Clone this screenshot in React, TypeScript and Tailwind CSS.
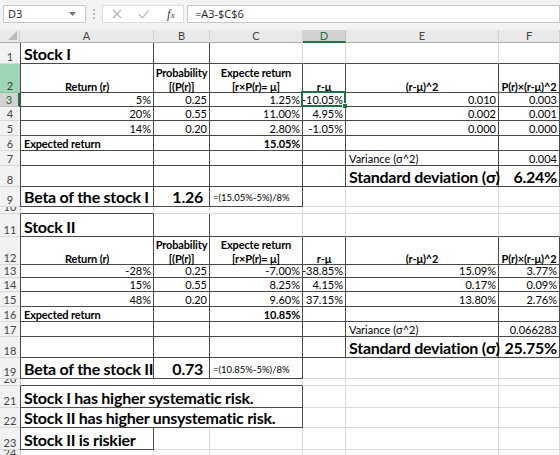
import React from 'react';

type Sp = {
  t?: React.ReactNode;
  a?: 'l' | 'r' | 'c';
  k?: 'n' | 'b' | 'big' | 'sm';
  R?: boolean;
  B?: boolean;
  L?: 0 | 1;
  s3?: boolean;
  sel?: boolean;
  pr6?: boolean;
};

const FONT = { fontFamily: 'Lato, "Open Sans", sans-serif' };

function Cell({ sp }: { sp: Sp }) {
  const cls = [
    'relative flex items-end whitespace-nowrap border-r border-b text-black',
    sp.R ? 'border-r-[#4a4a4a]' : 'border-r-[#dadada]',
    sp.B ? 'border-b-[#4a4a4a]' : 'border-b-[#dadada]',
    sp.L === 1 ? 'border-l border-l-[#4a4a4a]' : sp.L === 0 ? 'border-l border-l-[#c8c8c8]' : '',
    sp.a === 'r'
      ? sp.pr6
        ? 'justify-end pr-[6px]'
        : 'justify-end pr-[2px]'
      : sp.a === 'c'
      ? 'justify-center text-center'
      : 'justify-start pl-[3px]',
    sp.k === 'b'
      ? 'text-[11px] leading-[13px] font-bold tracking-[-0.15px]'
      : sp.k === 'big'
      ? 'text-[16px] leading-[18px] font-bold tracking-[-0.25px]'
      : sp.k === 'sm'
      ? 'text-[9.5px] leading-[12px] pb-[2px]'
      : 'text-[11px] leading-[13px]',
    sp.s3 ? 'col-span-3' : '',
  ].join(' ');
  return (
    <div className={cls}>
      {sp.t}
      {sp.sel && (
        <div className="absolute -left-[2px] -top-[2px] -right-[1px] -bottom-[1px] border-2 border-[#217346] pointer-events-none">
          <div className="absolute -right-[4px] -bottom-[4px] w-[6px] h-[6px] bg-[#217346] border border-white" />
        </div>
      )}
    </div>
  );
}

const H2 = (a: string, b: string) => (
  <span className="relative top-[2px] flex flex-col items-center leading-[14px]">
    <span>{a}</span>
    <span>{b}</span>
  </span>
);

type Data = {
  title: string;
  ret: string[];
  prob: string[];
  exp: string[];
  dev: string[];
  sq: string[];
  psq: string[];
  er: string;
  varc: string;
  sd: string;
  betaLabel: string;
  beta: string;
  formula: string;
  selFirst?: boolean;
};

const D = true;

function block(d: Data): Sp[][] {
  const rows: Sp[][] = [];
  rows.push([
    { t: d.title, k: 'big', L: 1, R: D, B: D },
    { R: D, B: D },
    { B: D },
    { B: D },
    { B: D },
    { B: D },
  ]);
  rows.push([
    { t: <span className="relative top-[1px]">Return (r)</span>, k: 'b', a: 'c', L: 1, R: D, B: D },
    { t: H2('Probability', '[(P(r)]'), k: 'b', a: 'c', R: D, B: D },
    { t: H2('Expecte return', '[r×P(r)= μ]'), k: 'b', a: 'c', R: D, B: D },
    { t: <span className="relative top-[1px]">r-μ</span>, k: 'b', a: 'c', R: D, B: D },
    { t: <span className="relative top-[1px]">(r-μ)^2</span>, k: 'b', a: 'c', R: D, B: D },
    { t: <span className="relative top-[1px]">P(r)×(r-μ)^2</span>, k: 'b', a: 'c', R: D, B: D },
  ]);
  for (let i = 0; i < 3; i++) {
    rows.push([
      { t: d.ret[i], a: 'r', L: 1, R: D, B: D },
      { t: d.prob[i], a: 'r', R: D, B: D },
      { t: d.exp[i], a: 'r', R: D, B: D },
      { t: d.dev[i], a: 'r', R: D, B: D, sel: d.selFirst && i === 0 },
      { t: d.sq[i], a: 'r', R: D, B: D },
      { t: d.psq[i], a: 'r', R: D, B: D },
    ]);
  }
  rows.push([
    { t: 'Expected return', k: 'b', L: 1, R: D, B: D },
    { R: D, B: D },
    { t: d.er, k: 'b', a: 'r', R: D, B: D },
    { R: D, B: D },
    { R: D, B: D },
    { R: D, B: D },
  ]);
  rows.push([
    { L: 1, R: D, B: D },
    { R: D, B: D },
    { R: D, B: D },
    { R: D, B: D },
    { t: 'Variance (σ^2)', R: D, B: D },
    { t: d.varc, a: 'r', R: D, B: D },
  ]);
  rows.push([
    { L: 1, R: D, B: D },
    { R: D, B: D },
    { R: D, B: D },
    { R: D, B: D },
    { t: 'Standard deviation (σ)', k: 'big', R: D, B: D },
    { t: d.sd, k: 'big', a: 'r', R: D, B: D },
  ]);
  rows.push([
    { t: d.betaLabel, k: 'big', L: 1, R: D, B: D },
    { t: d.beta, k: 'big', a: 'r', R: D, B: D, pr6: true },
    { t: d.formula, k: 'sm', R: D, B: D },
    {},
    {},
    {},
  ]);
  return rows;
}

const s1: Data = {
  title: 'Stock I',
  ret: ['5%', '20%', '14%'],
  prob: ['0.25', '0.55', '0.20'],
  exp: ['1.25%', '11.00%', '2.80%'],
  dev: ['-10.05%', '4.95%', '-1.05%'],
  sq: ['0.010', '0.002', '0.000'],
  psq: ['0.003', '0.001', '0.000'],
  er: '15.05%',
  varc: '0.004',
  sd: '6.24%',
  betaLabel: 'Beta of the stock I',
  beta: '1.26',
  formula: '=(15.05%-5%)/8%',
  selFirst: true,
};

const s2: Data = {
  title: 'Stock II',
  ret: ['-28%', '15%', '48%'],
  prob: ['0.25', '0.55', '0.20'],
  exp: ['-7.00%', '8.25%', '9.60%'],
  dev: ['-38.85%', '4.15%', '37.15%'],
  sq: ['15.09%', '0.17%', '13.80%'],
  psq: ['3.77%', '0.09%', '2.76%'],
  er: '10.85%',
  varc: '0.066283',
  sd: '25.75%',
  betaLabel: 'Beta of the stock II',
  beta: '0.73',
  formula: '=(10.85%-5%)/8%',
};

const sep = (): Sp[] => [{ L: 0, B: D }, {}, {}, {}, {}, {}];
const sep2 = (): Sp[] => [{ L: 0, B: D, s3: true }, {}, {}, {}];

const allRows: Sp[][] = [
  ...block(s1),
  sep(),
  ...block(s2),
  sep2(),
  [{ t: 'Stock I has higher systematic risk.', k: 'big', L: 1, R: D, B: D, s3: true }, {}, {}, {}],
  [{ t: 'Stock II has higher unsystematic risk.', k: 'big', L: 1, R: D, B: D, s3: true }, {}, {}, {}],
  [{ t: 'Stock II is riskier', k: 'big', L: 1, R: D, B: D }, {}, {}, {}, {}, {}],
  [{ L: 0 }, {}, {}, {}, {}, {}],
];

const labels = ['1', '2', '3', '4', '5', '6', '7', '8', '9', '10', '11', '12', '13', '14', '15', '16', '17', '18', '19', '20', '21', '22', '23', '24'];

function RowHead({ n }: { n: string }) {
  const base = 'flex items-end justify-center overflow-hidden text-[11px] leading-[13px] border-b';
  if (n === '2')
    return <div className={base + ' bg-[#9fd5b7] text-[#3a3a3a] border-b-[#8cc3a5]'}>{n}</div>;
  if (n === '3')
    return (
      <div className={base + ' bg-[#d2d2d2] text-[#217346] border-b-[#bdbdbd] border-r-2 border-r-[#217346]'}>{n}</div>
    );
  return <div className={base + ' bg-[#f2f2f2] text-[#444] border-b-[#d8d8d8]'}>{n}</div>;
}

const colLetters = ['A', 'B', 'C', 'D', 'E', 'F'];

export default function App() {
  return (
    <div className="w-[560px] h-[455px] overflow-hidden bg-white" style={FONT}>
      {/* formula bar */}
      <div className="h-[30px] bg-[#f3f3f3] flex items-start pt-[5px]" style={{ fontFamily: '"Open Sans", "Noto Sans", sans-serif' }}>
        <div className="ml-[3px] w-[83px] h-[18px] bg-white border border-[#c6c6c6] flex items-center pl-[4px] text-[11px] text-[#222]">
          <span>D3</span>
          <svg className="ml-auto mr-[9px]" width="7" height="4" viewBox="0 0 7 4">
            <path d="M0 0 L7 0 L3.5 4 Z" fill="#777" />
          </svg>
        </div>
        <div className="w-[16px] h-[18px] flex flex-col items-center justify-center gap-[2px]">
          <span className="w-[2px] h-[2px] bg-[#b8b8b8]" />
          <span className="w-[2px] h-[2px] bg-[#b8b8b8]" />
          <span className="w-[2px] h-[2px] bg-[#b8b8b8]" />
        </div>
        <div className="w-[82px] h-[18px] bg-white border border-[#dcdcdc] flex items-center">
          <svg className="ml-[9px]" width="10" height="10" viewBox="0 0 10 10">
            <path d="M1 1 L9 9 M9 1 L1 9" stroke="#b0b0b0" strokeWidth="1.1" />
          </svg>
          <svg className="ml-[16px]" width="12" height="10" viewBox="0 0 12 10">
            <path d="M1 5.5 L4.5 9 L11 1" stroke="#b0b0b0" strokeWidth="1.1" fill="none" />
          </svg>
          <span className="ml-[17px] text-[#444] italic text-[13px] leading-[14px]" style={{ fontFamily: '"Liberation Serif", serif' }}>
            f<span className="text-[9px]">x</span>
          </span>
        </div>
        <div className="ml-[3px] flex-1 h-[18px] bg-white border border-[#c6c6c6] flex items-center pl-[7px] text-[11px] text-[#222]">
          =A3-$C$6
        </div>
      </div>
      {/* grid */}
      <div className="grid grid-cols-[20px_134px_56px_93px_43px_153px_61px] grid-rows-[13px_21px_29px_14px_14px_15px_15px_15px_21px_20px_7px_23px_28px_13px_14px_15px_15px_15px_21px_21px_7px_22px_20px_22px_10px]">
        <div className="bg-[#e9e9e9] border-b border-b-[#ababab] border-r border-r-[#d0d0d0] relative">
          <svg className="absolute right-[2px] bottom-[2px]" width="9" height="9" viewBox="0 0 9 9">
            <path d="M9 0 L9 9 L0 9 Z" fill="#b9b9b9" />
          </svg>
        </div>
        {colLetters.map((l) =>
          l === 'D' ? (
            <div key={l} className="bg-[#d2d2d2] border-b-2 border-b-[#217346] border-r border-r-[#c0c0c0] flex items-center justify-center text-[11px] leading-[12px] text-[#217346]">
              {l}
            </div>
          ) : (
            <div key={l} className="bg-[#e9e9e9] border-b border-b-[#ababab] border-r border-r-[#d0d0d0] flex items-center justify-center text-[11px] leading-[12px] text-[#444]">
              {l}
            </div>
          )
        )}
        {allRows.map((row, ri) => (
          <React.Fragment key={ri}>
            <RowHead n={labels[ri]} />
            {row.map((sp, ci) => (
              <Cell key={ci} sp={ci === 0 && sp.L === undefined ? { ...sp, L: 0 } : sp} />
            ))}
          </React.Fragment>
        ))}
      </div>
    </div>
  );
}
